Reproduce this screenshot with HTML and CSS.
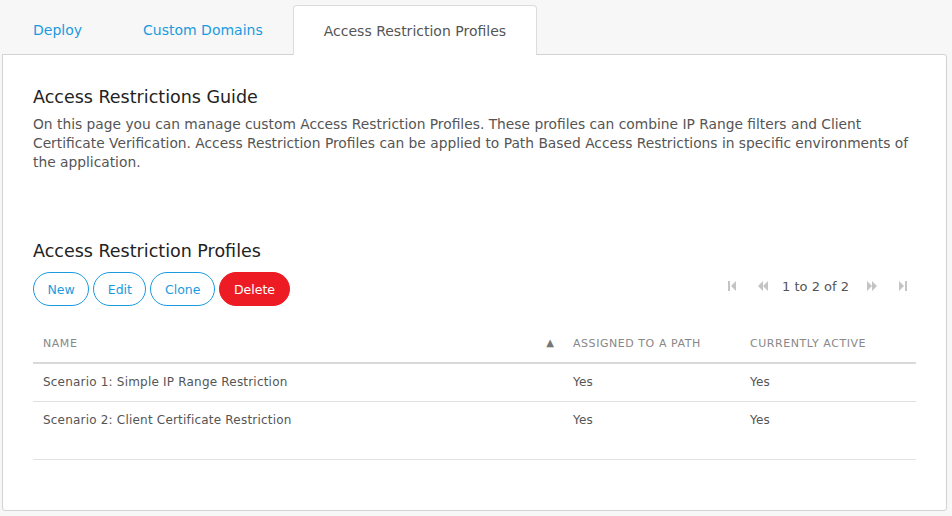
FILE: index.html
```html
<!DOCTYPE html>
<html>
<head>
<meta charset="utf-8">
<link rel="stylesheet" href="styles.css">
</head>
<body>
<div class="page">
  <nav class="tabs">
    <a class="tab">Deploy</a>
    <a class="tab">Custom Domains</a>
    <a class="tab active">Access Restriction Profiles</a>
  </nav>
  <main class="panel">
    <h2 class="title">Access Restrictions Guide</h2>
    <p class="guide">On this page you can manage custom Access Restriction Profiles. These profiles can combine IP Range filters and Client Certificate Verification. Access Restriction Profiles can be applied to Path Based Access Restrictions in specific environments of the application.</p>
    <h2 class="title second">Access Restriction Profiles</h2>
    <div class="toolbar">
      <div class="buttons">
        <button class="btn">New</button>
        <button class="btn">Edit</button>
        <button class="btn">Clone</button>
        <button class="btn danger">Delete</button>
      </div>
      <div class="pager">
        <svg class="pg" width="8" height="10" viewBox="0 0 8 10"><rect x="0" y="0" width="2" height="10" fill="currentColor"/><path d="M8 0 L3 5 L8 10 Z" fill="currentColor"/></svg>
        <svg class="pg gap" width="10" height="10" viewBox="0 0 10 10"><path d="M5 0 L0 5 L5 10 Z M10 0 L5 5 L10 10 Z" fill="currentColor"/></svg>
        <span class="pg-text">1 to 2 of 2</span>
        <svg class="pg" width="10" height="10" viewBox="0 0 10 10"><path d="M0 0 L5 5 L0 10 Z M5 0 L10 5 L5 10 Z" fill="currentColor"/></svg>
        <svg class="pg gap" width="8" height="10" viewBox="0 0 8 10"><path d="M0 0 L5 5 L0 10 Z" fill="currentColor"/><rect x="6" y="0" width="2" height="10" fill="currentColor"/></svg>
      </div>
    </div>
    <div class="grid">
      <div class="row head">
        <div class="cell name">NAME <span class="sort">&#9650;</span></div>
        <div class="cell assigned">ASSIGNED TO A PATH</div>
        <div class="cell active-col">CURRENTLY ACTIVE</div>
      </div>
      <div class="body">
        <div class="row item">
          <div class="cell name">Scenario 1: Simple IP Range Restriction</div>
          <div class="cell assigned">Yes</div>
          <div class="cell active-col">Yes</div>
        </div>
        <div class="row item last">
          <div class="cell name">Scenario 2: Client Certificate Restriction</div>
          <div class="cell assigned">Yes</div>
          <div class="cell active-col">Yes</div>
        </div>
      </div>
    </div>
  </main>
</div>
</body>
</html>
```
FILE: styles.css
```css
* { box-sizing: border-box; }
html, body { margin: 0; padding: 0; }
body {
  background: #f7f7f7;
  font-family: "DejaVu Sans", "Liberation Sans", sans-serif;
  color: #444;
}
.page {
  padding: 5px 5px 5px 2px;
}
.tabs {
  display: flex;
  height: 49px;
}
.tab {
  display: flex;
  align-items: center;
  padding: 0 30px 0 31px;
  font-size: 14px;
  color: #1a9be0;
}
.tab.active {
  background: #fff;
  color: #555;
  border: 1px solid #dcdcdc;
  border-bottom: none;
  border-radius: 4px 4px 0 0;
  padding: 0 30px;
  position: relative;
  margin-bottom: -1px;
  height: 50px;
  z-index: 1;
}
.panel {
  background: #fff;
  border: 1px solid #d2d2d2;
  border-radius: 0 3px 3px 3px;
  height: 457px;
  padding: 30px 30px 0 30px;
}
.title {
  margin: 0;
  font-size: 17.5px;
  font-weight: normal;
  line-height: 24px;
  color: #222;
}
.guide {
  margin: 6px 0 0 0;
  font-size: 13.8px;
  line-height: 19px;
  color: #555;
}
.title.second {
  margin-top: 67px;
}
.toolbar {
  display: flex;
  justify-content: space-between;
  align-items: center;
  margin-top: 9px;
}
.buttons {
  display: flex;
  gap: 4px;
}
.btn {
  height: 34px;
  padding: 0 13.5px;
  border-radius: 17px;
  border: 1px solid #1a9be0;
  background: #fff;
  color: #1a9be0;
  font-family: inherit;
  font-size: 12.5px;
}
.btn.danger {
  background: #ed1c24;
  border-color: #ed1c24;
  color: #fff;
  padding: 0 14px;
}
.pager {
  display: flex;
  align-items: center;
  color: #c4c4c4;
  padding-right: 9px;
  margin-bottom: 6px;
}
.pg { display: block; }
.pg.gap { margin-left: 22px; }
.pg-text {
  font-size: 13px;
  color: #555;
  margin: 0 18px 0 14px;
}
.grid {
  margin-top: 18px;
  border-bottom: 1px solid #e2e2e2;
}
.row {
  display: flex;
  align-items: center;
}
.row.head {
  height: 40px;
  border-bottom: 2px solid #d9d9d9;
  font-size: 11px;
  letter-spacing: 0.55px;
  color: #888;
}
.body {
  height: 95px;
}
.row.item {
  height: 35px;
  padding-bottom: 2px;
  border-bottom: 1px solid #e0e0e0;
  font-size: 12px;
  letter-spacing: 0.2px;
  color: #555;
  box-sizing: content-box;
}
.row.item.last { border-bottom: none; }
.cell {
  padding: 0 10px;
}
.cell.name {
  width: 530px;
  display: flex;
  justify-content: space-between;
}
.sort { font-size: 10px; color: #777; margin-right: -1px; letter-spacing: 0; }
.cell.assigned { width: 177px; }
.cell.active-col { flex: 1; }
```
